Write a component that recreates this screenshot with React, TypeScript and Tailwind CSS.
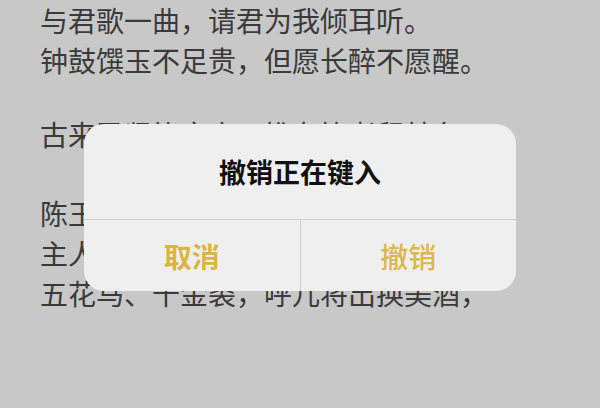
export default function App() {
  const font = { fontFamily: '"Noto Sans CJK SC", "Noto Sans", sans-serif' };
  return (
    <div
      className="relative w-[600px] h-[408px] overflow-hidden bg-[#c8c8c8]"
      style={font}
    >
      {/* Poem text */}
      <div className="pl-[40px] text-[28px] leading-[40px] text-[#3a3a3a] whitespace-nowrap">
        <p>与君歌一曲，请君为我倾耳听。</p>
        <p>钟鼓馔玉不足贵，但愿长醉不愿醒。</p>
        <p className="mt-[34px]">古来圣贤皆寂寞，惟有饮者留其名。</p>
        <p className="mt-[39px]">陈王昔时宴平乐，斗酒十千恣欢谑。</p>
        <p>主人何为言少钱，径须沽取对君酌。</p>
        <p>五花马、千金裘，呼儿将出换美酒，</p>
      </div>

      {/* Alert */}
      <div className="absolute left-[84px] top-[124px] w-[432px] h-[167px] rounded-[20px] bg-[#efefef] flex flex-col overflow-hidden">
        <div className="h-[95px] flex items-center justify-center pt-[2px]">
          <span className="text-[27px] font-bold text-[#111]">撤销正在键入</span>
        </div>
        <div className="h-px bg-[#cdcdcd]" />
        <div className="flex-1 flex">
          <button className="flex-1 flex items-center justify-center text-[28px] font-semibold text-[#dcb440]">
            取消
          </button>
          <div className="w-px bg-[#cdcdcd]" />
          <button className="flex-1 flex items-center justify-center text-[28px] font-medium text-[#dcb64e]">
            撤销
          </button>
        </div>
      </div>
    </div>
  );
}
